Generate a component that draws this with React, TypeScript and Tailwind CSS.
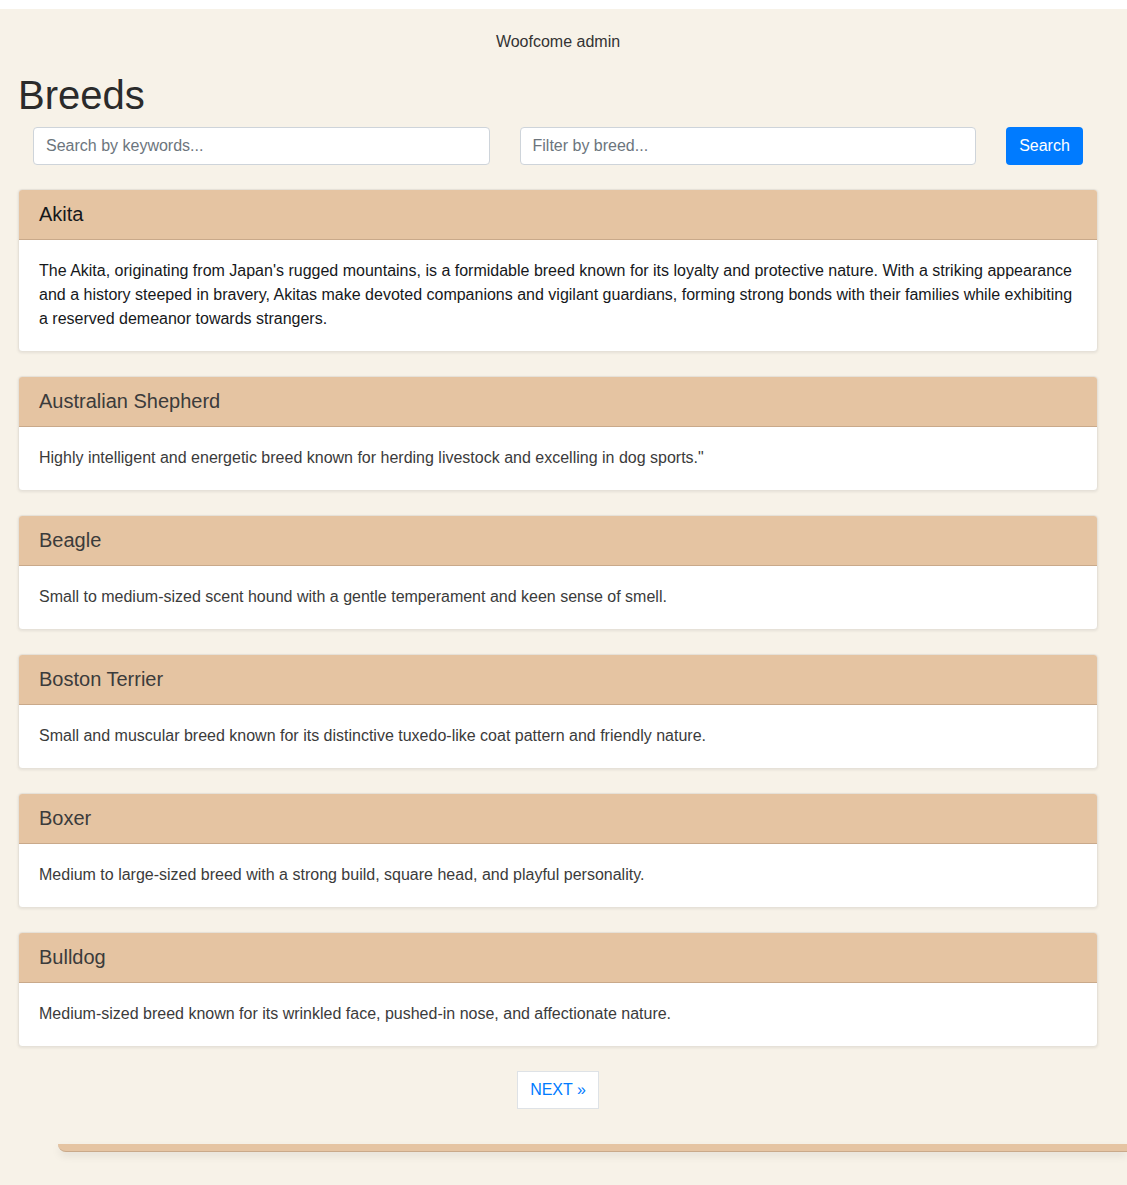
import React from "react";

interface Breed {
  name: string;
  description: string;
}

const breeds: Breed[] = [
  {
    name: "Akita",
    description:
      "The Akita, originating from Japan's rugged mountains, is a formidable breed known for its loyalty and protective nature. With a striking appearance and a history steeped in bravery, Akitas make devoted companions and vigilant guardians, forming strong bonds with their families while exhibiting a reserved demeanor towards strangers.",
  },
  {
    name: "Australian Shepherd",
    description:
      'Highly intelligent and energetic breed known for herding livestock and excelling in dog sports."',
  },
  {
    name: "Beagle",
    description:
      "Small to medium-sized scent hound with a gentle temperament and keen sense of smell.",
  },
  {
    name: "Boston Terrier",
    description:
      "Small and muscular breed known for its distinctive tuxedo-like coat pattern and friendly nature.",
  },
  {
    name: "Boxer",
    description:
      "Medium to large-sized breed with a strong build, square head, and playful personality.",
  },
  {
    name: "Bulldog",
    description:
      "Medium-sized breed known for its wrinkled face, pushed-in nose, and affectionate nature.",
  },
];

function BreedCard({ breed, active }: { breed: Breed; active: boolean }) {
  const tone = active ? "text-[#16181b]" : "text-[#3b3b3b]";
  return (
    <div className="bg-white rounded-[4px] border border-[#e6e1d8] shadow-[0_1px_3px_rgba(0,0,0,0.08)] overflow-hidden">
      <div className={`bg-[#e5c4a2] border-b border-[#c9a98a] h-[50px] pb-[2px] px-5 flex items-center text-[20px] ${tone}`}>
        {breed.name}
      </div>
      <div className={`px-5 pt-[19px] pb-[20px] text-[16px] leading-[24px] ${tone}`}>
        {breed.description}
      </div>
    </div>
  );
}

export default function App() {
  return (
    <div className="min-h-[1185px] bg-white pt-[9px] font-['Liberation_Sans',Arial,sans-serif]">
      <div className="bg-[#f7f2e8] min-h-[1176px] pt-[23px] overflow-hidden">
        <div className="ml-[18px] w-[1080px]">
          <div className="text-center text-[16px] leading-[20px] text-[#333]">Woofcome admin</div>

          <h1 className="text-[40px] leading-[48px] text-[#2b2b2b] mt-[19px]">Breeds</h1>

          <div className="flex items-center mt-[8px] px-[15px] gap-[30px]">
            <input
              className="flex-1 h-[38px] bg-white border border-[#ced4da] rounded-[4px] px-3 text-[16px] text-[#495057] placeholder:text-[#6c757d] outline-none"
              placeholder="Search by keywords..."
            />
            <input
              className="flex-1 h-[38px] bg-white border border-[#ced4da] rounded-[4px] px-3 text-[16px] text-[#495057] placeholder:text-[#6c757d] outline-none"
              placeholder="Filter by breed..."
            />
            <button className="h-[38px] w-[77px] bg-[#007bff] text-white text-[16px] rounded-[4px]">
              Search
            </button>
          </div>

          <div className="flex flex-col gap-[24px] mt-[24px]">
            {breeds.map((b, i) => (
              <BreedCard key={b.name} breed={b} active={i === 0} />
            ))}
          </div>

          <div className="flex justify-center mt-[24px]">
            <button className="h-[38px] w-[82px] bg-white border border-[#dee2e6] text-[#007bff] text-[16px]">
              NEXT »
            </button>
          </div>
        </div>

        <div className="mt-[35px] ml-[58px] h-[8px] bg-[#e5c4a2] border-b border-[#c9a98a] rounded-bl-[8px] shadow-[0_4px_8px_rgba(0,0,0,0.08)]" />
      </div>
    </div>
  );
}
